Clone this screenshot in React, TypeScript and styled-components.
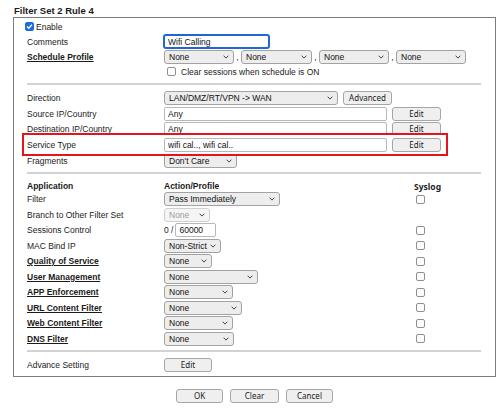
import React from 'react'
import styled, { createGlobalStyle } from 'styled-components'

const GlobalStyle = createGlobalStyle`
  body {
    margin: 0;
    background: #fff;
    color: #1b1b1b;
    font-family: 'Liberation Sans', Arial, sans-serif;
  }
`

const Page = styled.div`
  width: 483px;
  padding: 4px 0 0 13px;
`

const Title = styled.div`
  height: 13px;
  line-height: 13px;
  padding-left: 1px;
  font-size: 9.5px;
  font-weight: bold;
`

const RuleBox = styled.div`
  border: 1px solid #7c7c7c;
  padding: 1px 14px 3px 13px;
`

const Divider = styled.div<{ $top: number; $bottom: number }>`
  height: 2px;
  background: #d2d2d2;
  margin: ${(p) => p.$top}px 0 ${(p) => p.$bottom}px;
`

const Row = styled.div<{ $h?: number; $syslog?: boolean }>`
  display: grid;
  grid-template-columns: ${(p) => (p.$syslog ? '137px 250px 1fr' : '137px 1fr')};
  align-items: center;
  height: ${(p) => p.$h ?? 15.5}px;
  font-size: 8.5px;
`

// Service Type row carries the red call-out frame behind its own content
const HighlightRow = styled(Row)`
  position: relative;
  z-index: 1;

  &::before {
    content: '';
    position: absolute;
    left: -5px;
    right: 33px;
    top: -4px;
    bottom: -3px;
    border: 2px solid #e3141b;
    background: #fff;
    z-index: -1;
  }
`

const Label = styled.span<{ $link?: boolean }>`
  white-space: nowrap;
  font-weight: ${(p) => (p.$link ? 'bold' : 'normal')};
  text-decoration: ${(p) => (p.$link ? 'underline' : 'none')};
`

const HeadLabel = styled.span`
  font-weight: bold;
`

const SyslogHead = styled.span`
  font-family: 'Noto Sans', 'Open Sans', sans-serif;
  font-weight: bold;
  font-size: 8.5px;
`

const Value = styled.div`
  display: flex;
  align-items: center;
  gap: 5px;
`

const EnableLine = styled.label`
  display: flex;
  align-items: center;
  gap: 2px;
  height: 15px;
  margin-left: -2px;
  font-size: 8.5px;
`

const Box = styled.span<{ $on?: boolean }>`
  display: inline-flex;
  align-items: center;
  justify-content: center;
  box-sizing: border-box;
  width: 9px;
  height: 9px;
  border-radius: 2px;
  border: 1px solid ${(p) => (p.$on ? '#1a6fe0' : '#8f8f8f')};
  background: ${(p) => (p.$on ? '#1a6fe0' : '#fff')};
`

const CheckCell = styled.div`
  display: flex;
  align-items: center;
  padding-left: 2px;
`

const ClearLine = styled.div`
  display: flex;
  align-items: center;
  gap: 5px;
  padding-left: 3px;
`

const SelectBox = styled.div<{ $w: number; $disabled?: boolean }>`
  box-sizing: border-box;
  display: flex;
  align-items: center;
  justify-content: space-between;
  width: ${(p) => p.$w}px;
  height: 14px;
  padding: 0 4px 0 4px;
  border: 1px solid ${(p) => (p.$disabled ? '#d0d0d0' : '#a2a2a2')};
  border-radius: 3px;
  background: ${(p) => (p.$disabled ? '#f5f5f5' : '#ededed')};
  color: ${(p) => (p.$disabled ? '#9c9c9c' : '#111')};
  font-size: 8.5px;
  white-space: nowrap;
`

const TextField = styled.input<{ $w: number; $focus?: boolean }>`
  box-sizing: border-box;
  width: ${(p) => p.$w}px;
  height: ${(p) => (p.$focus ? 15 : 14)}px;
  margin: 0;
  padding: 0 3px;
  border: ${(p) => (p.$focus ? '2px solid #2166d8' : '1px solid #b8b8b8')};
  border-radius: ${(p) => (p.$focus ? 3 : 2)}px;
  background: #fff;
  color: #111;
  font-family: 'Liberation Sans', Arial, sans-serif;
  font-size: 8.5px;
  outline: none;
`

const Button = styled.button<{ $w: number }>`
  box-sizing: border-box;
  width: ${(p) => p.$w}px;
  height: 14px;
  margin: 0;
  padding: 0;
  border: 1px solid #a6a6a6;
  border-radius: 3px;
  background: #efefef;
  color: #1a1a1a;
  font-family: 'Noto Sans', 'Open Sans', sans-serif;
  font-size: 8px;
  line-height: 1;
`

const Comma = styled.span`
  width: 7px;
  text-align: center;
`

const Actions = styled.div`
  display: flex;
  justify-content: center;
  gap: 7px;
  margin-top: 12.5px;
`

const Chevron = () => (
  <svg width="6" height="4" viewBox="0 0 6 4">
    <path d="M0.6 0.7 L3 3.1 L5.4 0.7" fill="none" stroke="#444" strokeWidth="1" />
  </svg>
)

const Select: React.FC<{ w: number; text: string; disabled?: boolean }> = ({ w, text, disabled }) => (
  <SelectBox $w={w} $disabled={disabled}>
    <span>{text}</span>
    <Chevron />
  </SelectBox>
)

const Checkbox: React.FC<{ on?: boolean }> = ({ on }) => (
  <Box $on={on}>
    {on && (
      <svg width="7" height="7" viewBox="0 0 7 7">
        <path d="M1 3.6 L2.8 5.3 L6 1.6" fill="none" stroke="#fff" strokeWidth="1.4" />
      </svg>
    )}
  </Box>
)

const appRows = [
  { label: 'Quality of Service', w: 48 },
  { label: 'User Management', w: 94 },
  { label: 'APP Enforcement', w: 69 },
  { label: 'URL Content Filter', w: 78 },
  { label: 'Web Content Filter', w: 69 },
  { label: 'DNS Filter', w: 70 },
]

const App: React.FC = () => {
  return (
    <Page>
      <GlobalStyle />
      <Title>Filter Set 2 Rule 4</Title>
      <RuleBox>
        <EnableLine>
          <Checkbox on />
          <span>Enable</span>
        </EnableLine>
        <Row $h={15}>
          <Label>Comments</Label>
          <Value>
            <TextField $w={107} $focus defaultValue="Wifi Calling" style={{ marginLeft: -1 }} />
          </Value>
        </Row>
        <Row $h={15}>
          <Label $link>Schedule Profile</Label>
          <Value style={{ gap: 0 }}>
            <Select w={70} text="None" />
            <Comma>,</Comma>
            <Select w={71} text="None" />
            <Comma>,</Comma>
            <Select w={70} text="None" />
            <Comma>,</Comma>
            <Select w={70} text="None" />
          </Value>
        </Row>
        <Row $h={15}>
          <span />
          <ClearLine>
            <Checkbox />
            <span>Clear sessions when schedule is ON</span>
          </ClearLine>
        </Row>

        <Divider $top={4} $bottom={5} />

        <Row $h={15.75}>
          <Label>Direction</Label>
          <Value>
            <Select w={174} text="LAN/DMZ/RT/VPN -> WAN" />
            <Button $w={49}>Advanced</Button>
          </Value>
        </Row>
        <Row $h={15.75}>
          <Label>Source IP/Country</Label>
          <Value>
            <TextField $w={223} defaultValue="Any" readOnly />
            <Button $w={49}>Edit</Button>
          </Value>
        </Row>
        <Row $h={15.75}>
          <Label>Destination IP/Country</Label>
          <Value>
            <TextField $w={223} defaultValue="Any" readOnly />
            <Button $w={49}>Edit</Button>
          </Value>
        </Row>
        <HighlightRow $h={15.75}>
          <Label>Service Type</Label>
          <Value>
            <TextField $w={223} defaultValue="wifi cal.., wifi cal.." readOnly />
            <Button $w={49}>Edit</Button>
          </Value>
        </HighlightRow>
        <Row $h={15.75}>
          <Label>Fragments</Label>
          <Value>
            <Select w={73} text="Don't Care" />
          </Value>
        </Row>

        <Divider $top={3.25} $bottom={6.75} />

        <Row $syslog $h={10.5}>
          <HeadLabel>Application</HeadLabel>
          <HeadLabel>Action/Profile</HeadLabel>
          <SyslogHead>Syslog</SyslogHead>
        </Row>
        <Row $syslog>
          <Label>Filter</Label>
          <Value>
            <Select w={116} text="Pass Immediately" />
          </Value>
          <CheckCell>
            <Checkbox />
          </CheckCell>
        </Row>
        <Row $syslog>
          <Label>Branch to Other Filter Set</Label>
          <Value>
            <Select w={46} text="None" disabled />
          </Value>
          <span />
        </Row>
        <Row $syslog>
          <Label>Sessions Control</Label>
          <Value style={{ gap: 2 }}>
            <span>0 /</span>
            <TextField $w={41} defaultValue="60000" readOnly />
          </Value>
          <CheckCell>
            <Checkbox />
          </CheckCell>
        </Row>
        <Row $syslog>
          <Label>MAC Bind IP</Label>
          <Value>
            <Select w={57} text="Non-Strict" />
          </Value>
          <CheckCell>
            <Checkbox />
          </CheckCell>
        </Row>
        {appRows.map((r) => (
          <Row $syslog key={r.label}>
            <Label $link>{r.label}</Label>
            <Value>
              <Select w={r.w} text="None" />
            </Value>
            <CheckCell>
              <Checkbox />
            </CheckCell>
          </Row>
        ))}

        <Divider $top={4} $bottom={5.25} />

        <Row $h={15}>
          <Label>Advance Setting</Label>
          <Value>
            <Button $w={48}>Edit</Button>
          </Value>
        </Row>
      </RuleBox>
      <Actions>
        <Button $w={47}>OK</Button>
        <Button $w={49}>Clear</Button>
        <Button $w={47}>Cancel</Button>
      </Actions>
    </Page>
  )
}

export default App
